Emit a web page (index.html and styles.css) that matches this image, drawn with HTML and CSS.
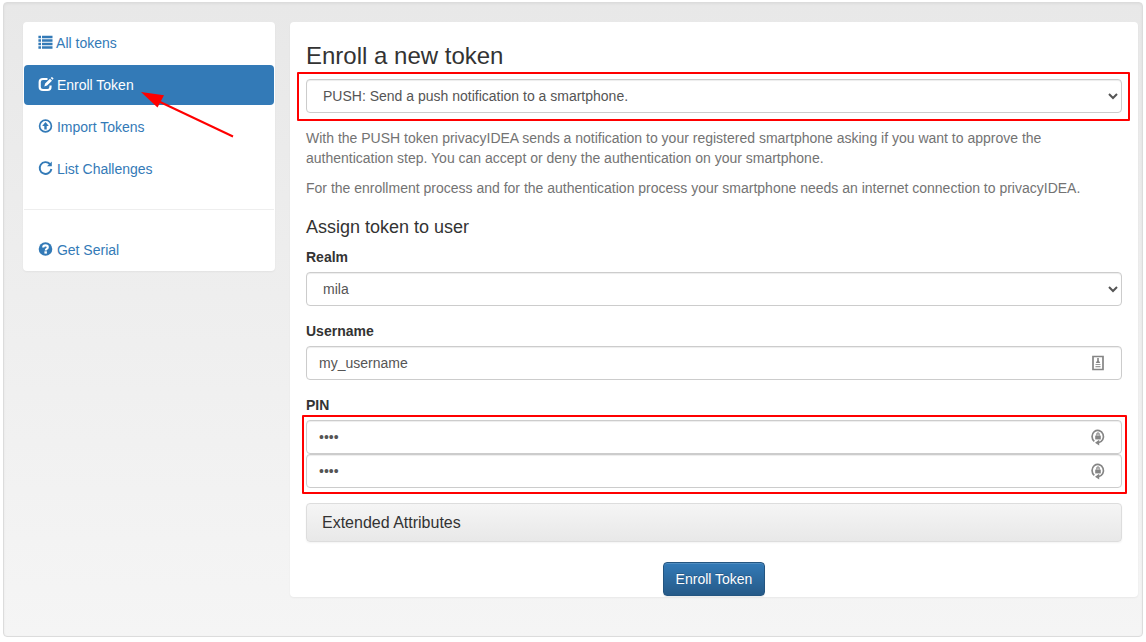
FILE: index.html
```html
<!DOCTYPE html>
<html lang="en">
<head>
<meta charset="utf-8">
<title>Enroll a new token</title>
<meta name="viewport" content="width=device-width, initial-scale=1">
<link rel="stylesheet" href="styles.css">
</head>
<body>
<svg width="0" height="0" class="sprite" aria-hidden="true">
  <symbol id="lock-cycle" viewBox="0 0 16 18">
    <path d="M4.300 13.400A5.700 6.100 0 1 1 8.500 14.600" fill="none" stroke="#858585" stroke-width="1.700"/>
    <path d="M9.200 11.800v5.800L5 14.700z" fill="#858585"/>
    <path d="M5.200 7.600h5.600v3.800H5.200z" fill="#858585"/>
    <path d="M6.600 7.800V6.200a1.400 1.400 0 0 1 2.800 0v1.600" fill="#b5b5b5" stroke="#999"/>
  </symbol>
</svg>
<main class="well">
  <nav class="panel sidebar" aria-label="Tokens">
    <ul class="nav">
      <li><a class="nav-link" href="#"><svg class="icon" viewBox="0 0 14 14"><path d="M-.6.700h2.600v2.600H-.6zM3 .7h10.500v2.600H3zM-.6 4.300h2.600v2.400H-.6zM3 4.300h10.500v2.400H3zM-.6 7.700h2.600v2.500H-.6zM3 7.700h10.500v2.500H3zM-.6 11.200h2.600v2.500H-.6zM3 11.200h10.500v2.500H3z"/></svg> All tokens</a></li>
      <li><a class="nav-link active" href="#" aria-current="page"><svg class="icon" viewBox="0 0 14 14"><path d="M8.500 2H4Q.7 2 .7 5v5q0 3 3.300 3h4.500q3 0 3-3V8.600" fill="none" stroke="currentColor" stroke-width="2.200"/><path d="M5.300 9.600l.8-3L11 1.700l2 2-4.900 4.900zM11.700 1l.8-.8q.4-.4.8 0l1 1q.4.4 0 .8l-.8.8z"/></svg> Enroll Token</a></li>
      <li><a class="nav-link" href="#"><svg class="icon" viewBox="0 0 14 14"><circle cx="6.500" cy="7" r="5.900" fill="none" stroke="currentColor" stroke-width="1.700"/><path d="M6.500 3l3.300 4H7.700v3.500H5.300V7H3.200z"/></svg> Import Tokens</a></li>
      <li><a class="nav-link" href="#"><svg class="icon" viewBox="0 0 14 14"><path d="M10.900 3A5.900 5.900 0 1 0 12.400 8" fill="none" stroke="currentColor" stroke-width="1.900"/><path d="M12.800.4v4.800H8z"/></svg> List Challenges</a></li>
    </ul>
    <hr class="divider">
    <ul class="nav">
      <li><a class="nav-link" href="#"><svg class="icon" viewBox="0 0 14 14"><circle cx="6.500" cy="7" r="6.800"/><path d="M4.200 5.500q0-2.100 2.300-2.100t2.300 1.800q0 1-1.100 1.600-.9.500-.9 1.400v.4" fill="none" stroke="#fff" stroke-width="2.100"/><path d="M5.400 9.300h2.500v2.300H5.400z" fill="#fff"/></svg> Get Serial</a></li>
    </ul>
    <svg class="arrow" viewBox="0 0 94 48" aria-hidden="true"><path d="M18 9l75 35.500" stroke="#f00" stroke-width="2"/><path d="M1 0l23 3.200-6.500 12.300z" fill="#f00"/></svg>
  </nav>
  <form class="panel content">
    <h1 class="title">Enroll a new token</h1>
    <div class="highlighted type-group">
      <select class="control" aria-label="Token type"><option>PUSH: Send a push notification to a smartphone.</option></select>
    </div>
    <div class="help">
      <p>With the PUSH token privacyIDEA sends a notification to your registered smartphone asking if you want to approve the authentication step. You can accept or deny the authentication on your smartphone.</p>
      <p>For the enrollment process and for the authentication process your smartphone needs an internet connection to privacyIDEA.</p>
    </div>
    <h2 class="subtitle">Assign token to user</h2>
    <div class="group">
      <label for="realm">Realm</label>
      <select class="control" id="realm"><option>mila</option></select>
    </div>
    <div class="group">
      <label for="username">Username</label>
      <div class="field">
        <input class="control" id="username" type="text" value="my_username">
        <svg class="field-icon" viewBox="0 0 16 18" aria-hidden="true"><path d="M3 2.500h10v13H3z" fill="none" stroke="#858585" stroke-width="1.700"/><path d="M7.200 4h1.600v2.500l1.400 2.500H5.800l1.400-2.500z" fill="#858585"/><path d="M5.500 10h5v1H5.500zM5.500 12h5v1.200H5.500z" fill="#999"/></svg>
      </div>
    </div>
    <div class="group">
      <label for="pin">PIN</label>
      <div class="highlighted pins">
        <div class="field">
          <input class="control" id="pin" type="password" value="1234">
          <svg class="field-icon" aria-hidden="true"><use href="#lock-cycle"/></svg>
        </div>
        <div class="field">
          <input class="control" type="password" value="1234" aria-label="Repeat PIN">
          <svg class="field-icon" aria-hidden="true"><use href="#lock-cycle"/></svg>
        </div>
      </div>
    </div>
    <button class="accordion" type="button">Extended Attributes</button>
    <div class="actions"><button class="submit" type="button">Enroll Token</button></div>
  </form>
</main>
</body>
</html>
```
FILE: styles.css
```css
*, *::before, *::after { box-sizing: border-box; }
body {
  margin: 0;
  font: 14px/20px "Liberation Sans", Arial, sans-serif;
  color: #333;
  background: #fff;
}
.sprite { position: absolute; }
.well {
  display: grid;
  grid-template-columns: 252fr 848fr;
  align-items: start;
  gap: 15px;
  margin: 2px 3px 5px;
  padding: 19px 4px 39px 19px;
  border: 1px solid #dcdcdc;
  border-radius: 4px;
  background: linear-gradient(#e8e8e8, #f5f5f5);
  box-shadow: inset 0 1px 3px rgba(0, 0, 0, .05), 0 1px 0 rgba(255, 255, 255, .1);
}
.panel {
  background: #fff;
  border: 1px solid transparent;
  border-radius: 4px;
  box-shadow: 0 1px 2px rgba(0, 0, 0, .05);
}
.sidebar { position: relative; }
.nav {
  display: grid;
  gap: 2px;
  margin: 0;
  padding: 0;
  list-style: none;
}
.nav-link {
  display: block;
  padding: 10px 15px;
  border-radius: 4px;
  color: #337ab7;
  text-decoration: none;
}
.nav-link.active { background: #337ab7; color: #fff; }
.icon {
  width: 14px;
  height: 14px;
  vertical-align: -1px;
  fill: currentColor;
  overflow: visible;
}
.divider { margin: 20px 0; border: 0; border-top: 1px solid #eee; }
.arrow {
  position: absolute;
  left: 116px;
  top: 69px;
  width: 94px;
  height: 48px;
}
.content { padding: 0 15px; }
.title { margin: 20px 0 10px; font-size: 24px; line-height: 26px; font-weight: 400; }
.subtitle { margin: 19px 0 10px; font-size: 18px; line-height: 20px; font-weight: 400; }
.group { margin-bottom: 15px; }
label { display: block; margin-bottom: 5px; font-weight: 700; }
.control {
  display: block;
  width: 100%;
  height: 34px;
  padding: 6px 12px;
  border: 1px solid #ccc;
  border-radius: 4px;
  background-color: #fff;
  color: #555;
  font: inherit;
  box-shadow: inset 0 1px 1px rgba(0, 0, 0, .075);
}
.help { margin-top: 15px; color: #737373; }
.help p { margin: 0 0 10px; }
.field { position: relative; }
.field-icon {
  position: absolute;
  right: 16px;
  top: 8px;
  width: 16px;
  height: 18px;
}
.highlighted { position: relative; }
.highlighted::after {
  content: "";
  position: absolute;
  border: 2px solid #f00;
  border-radius: 1px;
  pointer-events: none;
}
.type-group::after { inset: -7px -8px -8px -9px; }
.pins::after { inset: -5px -5px -6px -4px; }
.accordion {
  display: block;
  width: 100%;
  padding: 9px 15px 8px;
  border: 1px solid #ddd;
  border-radius: 4px;
  background: linear-gradient(#f5f5f5, #e8e8e8);
  color: #333;
  font: inherit;
  font-size: 16px;
  text-align: left;
  box-shadow: 0 1px 2px rgba(0, 0, 0, .05);
}
.actions { margin-top: 20px; text-align: center; }
.submit {
  display: inline-block;
  vertical-align: top;
  padding: 6px 12px;
  border: 1px solid #245580;
  border-radius: 4px;
  background: linear-gradient(#337ab7, #265a88);
  color: #fff;
  font: inherit;
  text-shadow: 0 -1px 0 rgba(0, 0, 0, .2);
  box-shadow: inset 0 1px 0 rgba(255, 255, 255, .15), 0 1px 1px rgba(0, 0, 0, .075);
}
```
